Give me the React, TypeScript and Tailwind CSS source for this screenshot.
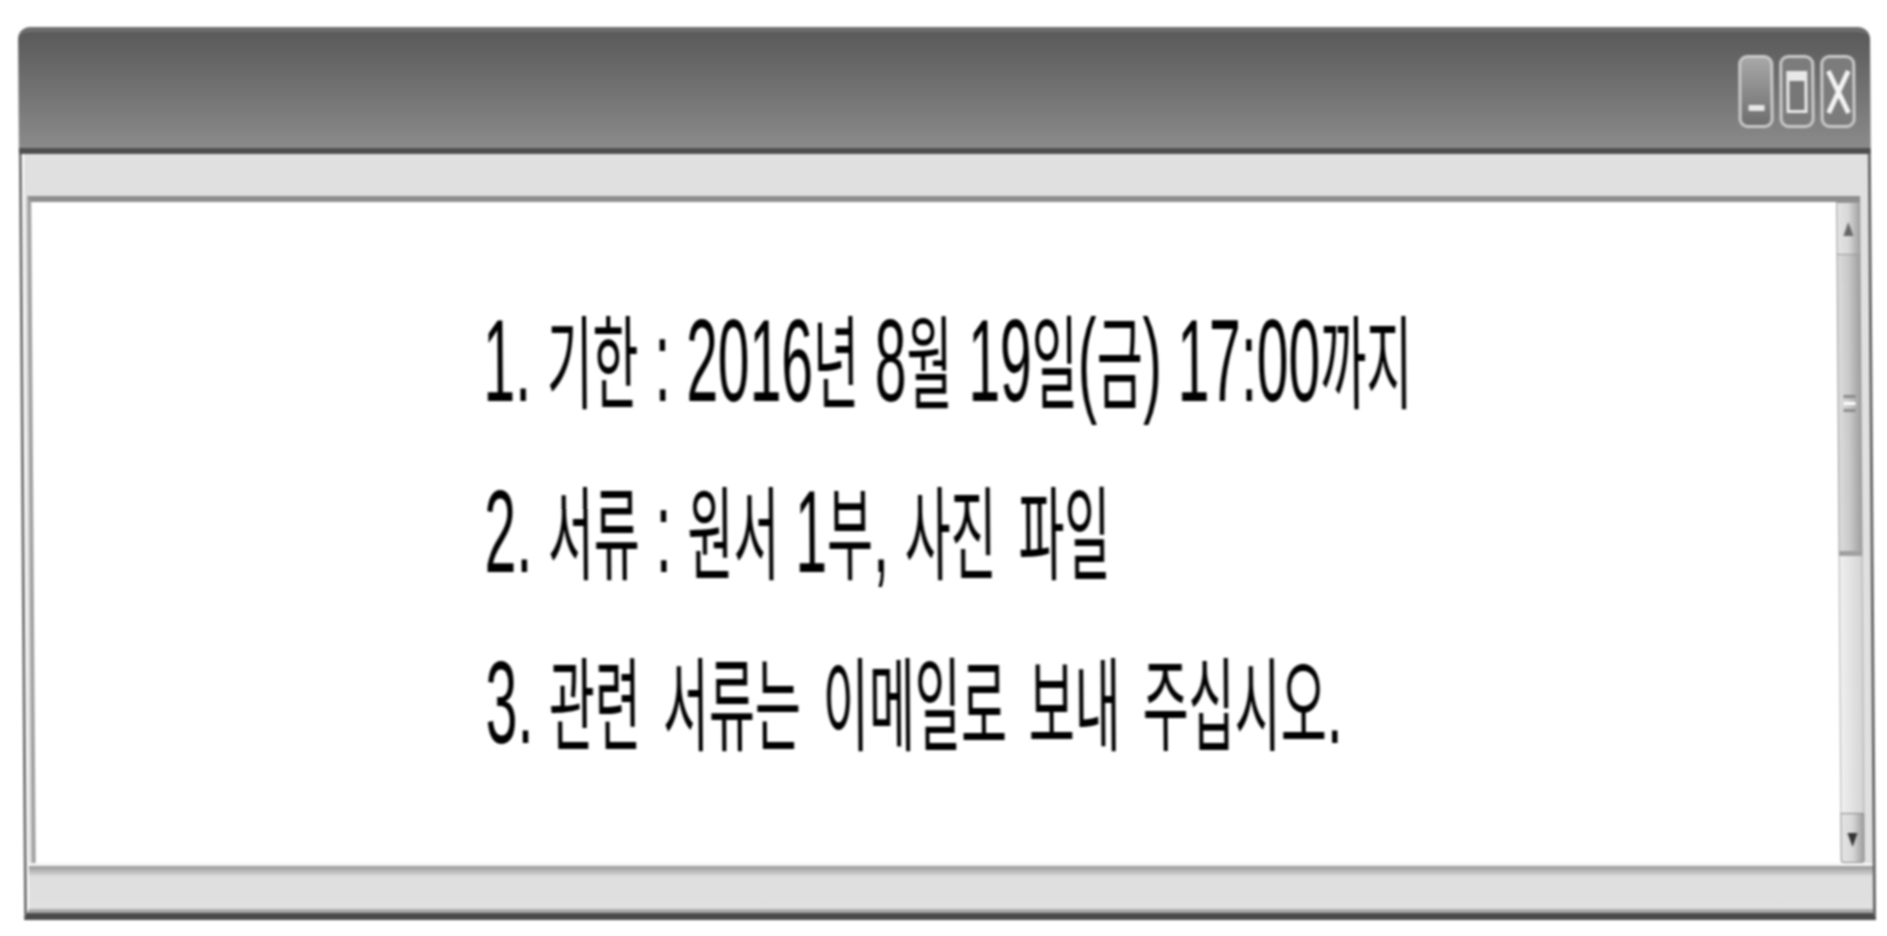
function K({ children }: { children: string }) {
  return <span className="text-[50px] [word-spacing:8px]">{children}</span>;
}

function Line({ children }: { children: React.ReactNode }) {
  return (
    <div className="h-[171px] leading-[171px] whitespace-pre origin-center scale-y-[2.05]">
      {children}
    </div>
  );
}

function Arrow({ down }: { down?: boolean }) {
  return (
    <svg width="10" height="14" viewBox="0 0 10 14" className="absolute left-[6px] top-[19px]">
      <path d={down ? "M0 0H10L5 14Z" : "M5 0L10 14H0Z"} fill={down ? "#333" : "#666"} />
    </svg>
  );
}

export default function App() {
  return (
    <div className="h-[936px] w-[1887px] overflow-hidden bg-white pt-[27px] pl-[18px]">
      <div className="flex h-[893px] w-[1852px] origin-top-left skew-x-[0.39deg] blur-[0.8px] flex-col font-['Liberation_Sans','Noto_Sans_CJK_KR',sans-serif] text-[57px] text-black">
        <div className="flex h-[127px] shrink-0 justify-end gap-[6px] rounded-t-[12px] border-t-[5px] border-b-[6px] border-t-[#6e6e6e] border-b-[#4f4f4f] bg-gradient-to-b from-[#5a5a5a] to-[#8b8b8b] pt-[23px] pr-[15px]">
          <div className="flex h-[73px] w-[35px] items-end justify-center rounded-[9px] border-[3px] border-[#c9c9c9] bg-gradient-to-b from-[#a8a8a8] to-[#6e6e6e] pb-[14px]">
            <div className="h-[6px] w-[16px] bg-[#e8e8e8]" />
          </div>
          <div className="flex h-[73px] w-[35px] items-center justify-center rounded-[9px] border-[3px] border-[#c9c9c9] bg-[#7c7c7c]">
            <div className="h-[42px] w-[21px] border-[3px] border-t-[10px] border-[#e8e8e8] bg-[#777]" />
          </div>
          <div className="flex h-[73px] w-[35px] items-center justify-center rounded-[9px] border-[3px] border-[#c9c9c9] bg-[#7c7c7c]">
            <svg width="24" height="44" viewBox="0 0 24 44">
              <path d="M2 1L22 43M22 1L2 43" stroke="#f4f4f4" strokeWidth="5" fill="none" />
            </svg>
          </div>
        </div>

        <div className="flex flex-1 flex-col border-r-[3px] border-b-[7px] border-l-[3px] border-r-[#6a6a6a] border-b-[#4a4a4a] border-l-[#777]">
          <div className="h-[42px] shrink-0 border-l-2 border-l-white bg-[#e0e0e0]" />
          <div className="flex flex-1 border-l-2 border-l-white bg-[#e0e0e0] pr-[8px] pl-[3px]">
            <div className="flex flex-1 flex-col border-t-[6px] border-l-[4px] border-t-[#8e8e8e] border-l-[#a2a2a2] bg-white">
              <div className="flex flex-1">
                <div className="flex-1 pt-[74px] pl-[451px]">
                  <Line>
                    1. <K>기한</K> : 2016<K>년</K> 8<K>월</K> 19<K>일</K>(<K>금</K>) 17:00<K>까지</K>
                  </Line>
                  <Line>
                    2. <K>서류</K> : <K>원서</K> 1<K>부</K>, <K>사진 파일</K>
                  </Line>
                  <Line>
                    3. <K>관련 서류는 이메일로 보내 주십시오</K>.
                  </Line>
                </div>
                <div className="flex w-[24px] shrink-0 flex-col">
                  <div className="relative h-[53px] shrink-0 border border-[#9a9a9a] bg-gradient-to-r from-[#e4e4e4] via-[#d8d8d8] to-[#a4a4a4]">
                    <Arrow />
                  </div>
                  <div className="relative flex h-[301px] shrink-0 flex-col items-center justify-center gap-[4px] border-x border-b-[5px] border-x-[#9a9a9a] border-b-[#a0a0a0] bg-gradient-to-r from-[#dcdcdc] via-[#c8c8c8] to-[#a0a0a0]">
                    <div className="h-[3px] w-[12px] bg-[#8c8c8c]" />
                    <div className="h-[3px] w-[12px] bg-white" />
                    <div className="h-[3px] w-[12px] bg-[#8c8c8c]" />
                  </div>
                  <div className="flex-1 border-x border-x-[#b0b0b0] bg-gradient-to-r from-[#f0f0f0] to-[#d4d4d4]" />
                  <div className="relative h-[50px] shrink-0 rounded-b-[3px] border border-[#8c8c8c] bg-gradient-to-r from-[#e4e4e4] via-[#d8d8d8] to-[#a0a0a0]">
                    <Arrow down />
                  </div>
                </div>
              </div>
            </div>
          </div>
          <div className="h-[50px] shrink-0 border-t-[3px] border-b-[4px] border-l-2 border-t-[#f4f4f4] border-b-[#a8a8a8] border-l-white bg-gradient-to-b from-[#989898] via-[#dfdfdf] via-25% to-[#e0e0e0]" />
        </div>
      </div>
    </div>
  );
}
